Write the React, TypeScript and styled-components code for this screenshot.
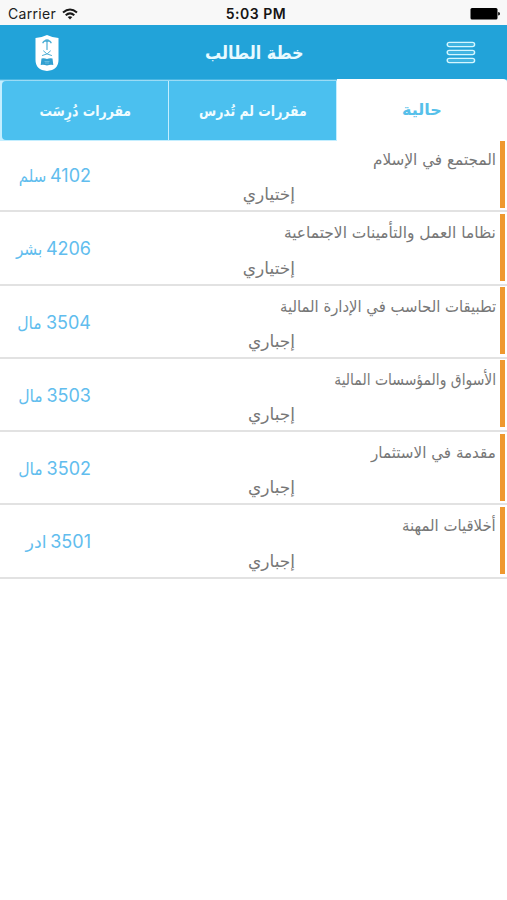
import React from "react";
import styled, { createGlobalStyle } from "styled-components";

const Global = createGlobalStyle`
  html, body { margin: 0; background: #fff; }
  * { box-sizing: border-box; }
`;

const arabic = `"DejaVu Sans", sans-serif`;

const Screen = styled.main`
  display: flex;
  flex-direction: column;
  width: 507px;
  height: 900px;
  overflow: hidden;
  background: #fff;
  font-family: ${arabic};
`;

const StatusBar = styled.div`
  display: grid;
  grid-template-columns: 1fr auto 1fr;
  align-items: center;
  height: 25px;
  padding: 2px 7px 0 8px;
  background: #f8f8f8;
  color: #202020;
  font: 14px/20px Inter, sans-serif;
`;

const Carrier = styled.div`
  display: flex;
  align-items: center;
  gap: 6px;
  letter-spacing: 0.3px;
`;

const Time = styled.span`
  font-weight: 600;
  font-size: 14px;
  letter-spacing: 0.5px;
  padding-left: 4px;
  color: #151515;
`;

const Battery = styled.svg`
  justify-self: end;
`;

const Header = styled.header`
  display: grid;
  grid-template-columns: 94px 1fr 92px;
  align-items: center;
  justify-items: center;
  height: 54px;
  padding-top: 1px;
  background: #22a3d9;
`;

/* Text keeps its joined letterforms while being condensed or widened. */
const Fit = styled.span<{ $x?: number; $origin?: string }>`
  display: inline-block;
  white-space: nowrap;
  transform: scaleX(${(p) => p.$x ?? 1});
  transform-origin: ${(p) => p.$origin ?? "center"};
`;

const Title = styled.h1`
  margin: 0;
  color: #e9faff;
  font-size: 18px;
  line-height: 24px;
  font-weight: 700;
`;

const Tabs = styled.nav`
  display: flex;
  flex: none;
  height: 62px;
  padding: 0 0 0 2px;
  background: linear-gradient(to bottom, #22a3d9 0, #c3eeff 2px);
`;

const Tab = styled.button<{ $active?: boolean }>`
  flex: ${(p) => (p.$active ? "0 0 170px" : "0 0 auto")};
  width: 167px;
  height: ${(p) => (p.$active ? "62px" : "59px")};
  margin: ${(p) => (p.$active ? 0 : 2)}px 1px 0 0;
  padding: 0;
  border: 0;
  border-radius: ${(p) => (p.$active ? "0 4px 0 0" : "0")};
  background: ${(p) => (p.$active ? "#fff" : "#4bc0ef")};
  color: ${(p) => (p.$active ? "#56c0ea" : "#f0fcff")};
  font: 700 ${(p) => (p.$active ? 16 : 15)}px/24px ${arabic};
  &:first-child { width: 166px; border-radius: 4px 0 0 4px; }
`;

const List = styled.ul`
  margin: -2px 0 0;
  padding: 0;
  list-style: none;
`;

const Row = styled.li`
  display: grid;
  grid-template-columns: 91px 204px 201px 11px;
  height: 73.25px;
  border-bottom: 2px solid #e2e2e2;
`;

const Code = styled.div`
  align-self: center;
  justify-self: end;
  display: flex;
  gap: 4px;
  padding-top: 3px;
  color: #61bdee;
  font-size: 17px;
  line-height: 24px;
`;

const Digits = styled.span`
  font: 18px/24px Inter, sans-serif;
`;

const Kind = styled.div`
  align-self: end;
  justify-self: end;
  padding-bottom: 3px;
  color: #777;
  font-size: 17px;
  line-height: 26px;
`;

const Name = styled.div`
  justify-self: end;
  padding-top: 8px;
  color: #777;
  font-size: 16px;
  line-height: 26px;
`;

const Marker = styled.div`
  justify-self: end;
  width: 5px;
  height: 67px;
  margin: 1.5px 2px 0 0;
  background: #ef982e;
`;

const ELECTIVE = "إختياري";
const REQUIRED = "إجباري";

const courses = [
  { name: "المجتمع في الإسلام", kind: ELECTIVE, code: "4102", dept: "سلم", x: 0.953, dx: 0.88 },
  { name: "نظاما العمل والتأمينات الاجتماعية", kind: ELECTIVE, code: "4206", dept: "بشر", x: 0.964, dx: 0.9 },
  { name: "تطبيقات الحاسب في الإدارة المالية", kind: REQUIRED, code: "3504", dept: "مال", x: 0.927, dx: 0.92 },
  { name: "الأسواق والمؤسسات المالية", kind: REQUIRED, code: "3503", dept: "مال", x: 0.87, dx: 0.92 },
  { name: "مقدمة في الاستثمار", kind: REQUIRED, code: "3502", dept: "مال", x: 0.947, dx: 0.92 },
  { name: "أخلاقيات المهنة", kind: REQUIRED, code: "3501", dept: "ادر", x: 0.93, dx: 1.02 },
];

const Wifi = () => (
  <svg width="16" height="12" viewBox="0 0 16 12" fill="none" stroke="#181818" strokeWidth="2">
    <path d="M1 4.6Q8-1.6 15 4.6M3.7 7.3Q8 3.4 12.3 7.3" />
    <path d="M8 11.4 5.7 9.1Q8 7.2 10.3 9.1Z" fill="#181818" stroke="none" />
  </svg>
);

const Crest = () => (
  <svg width="24" height="38" viewBox="0 0 24 38">
    <path d="M.5 4Q7 3.5 12 1Q17 3.5 23.5 4V26Q23.5 36 12 37Q.5 36 .5 26Z" fill="#fff" />
    <g fill="none" stroke="#4caed5" strokeLinecap="round">
      <path strokeWidth="1.2" d="M12 7V15.5" />
      <path strokeWidth="1.5" d="M8 8.6Q9.5 5.8 12 7.4Q14.5 5.8 16 8.6M9.5 7.2Q12 5 14.5 7.2" />
      <path strokeWidth="1" d="M8.5 17Q11 20.5 16.5 21.5M15.5 17Q13 20.5 7.5 21.5" />
    </g>
    <path d="M6.5 24.5Q9.5 24 12 25Q14.5 24 17.5 24.5L18.3 31Q15 30.5 12 31.5Q9 30.5 5.7 31Z" fill="#329fd0" />
    <path d="M9.5 27.5h5M10 29h4" stroke="#7cc5e4" strokeWidth=".7" />
  </svg>
);

const Menu = () => (
  <svg width="30" height="24" viewBox="0 0 30 24" fill="#42b5e2" stroke="#d5f7ff" strokeWidth="1.4">
    <rect x="1.2" y="1.4" width="27.4" height="4.2" rx="2.1" />
    <rect x="1.2" y="9.4" width="27.4" height="4.2" rx="2.1" />
    <rect x="1.2" y="17.4" width="27.4" height="4.2" rx="2.1" />
  </svg>
);

export default function App() {
  return (
    <Screen>
      <Global />
      <StatusBar>
        <Carrier>Carrier <Wifi /></Carrier>
        <Time>5:03 PM</Time>
        <Battery width="30" height="12" viewBox="0 0 30 12">
          <rect x=".5" y="0" width="27" height="11.5" rx="1.5" />
          <path d="M28.2 4Q30 4 30 5.8T28.2 7.6Z" />
        </Battery>
      </StatusBar>
      <Header>
        <Crest />
        <Title dir="rtl"><Fit $x={0.89}>خطة الطالب</Fit></Title>
        <Menu />
      </Header>
      <Tabs>
        <Tab dir="rtl"><Fit $x={0.83}>مقررات دُرِسَت</Fit></Tab>
        <Tab dir="rtl"><Fit $x={0.83}>مقررات لم تُدرس</Fit></Tab>
        <Tab dir="rtl" $active><Fit>حالية</Fit></Tab>
      </Tabs>
      <List>
        {courses.map((c) => (
          <Row key={c.code}>
            <Code dir="rtl"><Digits>{c.code}</Digits><Fit $origin="right" $x={c.dx}>{c.dept}</Fit></Code>
            <Kind dir="rtl"><Fit $origin="right">{c.kind}</Fit></Kind>
            <Name dir="rtl"><Fit $origin="right" $x={c.x}>{c.name}</Fit></Name>
            <Marker />
          </Row>
        ))}
      </List>
    </Screen>
  );
}
